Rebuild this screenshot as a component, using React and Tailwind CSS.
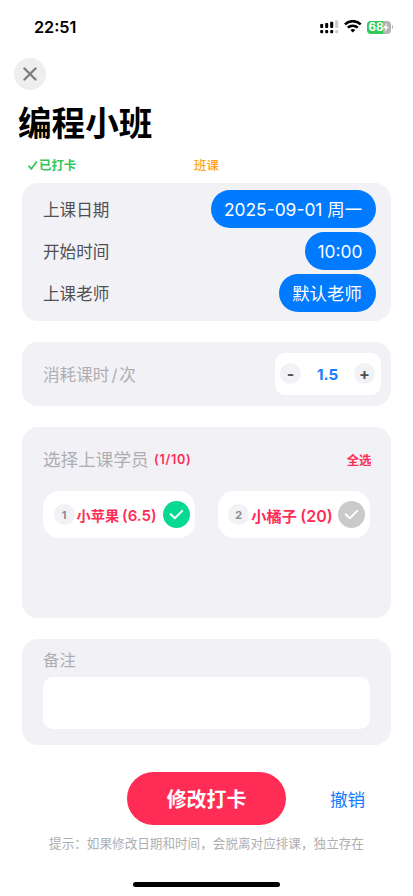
import { useState } from 'react';

const students = [
  { id: 1, name: '小苹果', hours: '(6.5)', size: 'text-[14.2px]', hoursSize: 'ml-[3px] text-[15px]' },
  { id: 2, name: '小橘子', hours: '(20)', size: 'text-[15.2px]', hoursSize: 'ml-[3.5px] text-[16px]' },
];

function SignalIcon() {
  return (
    <svg width="19" height="14" viewBox="0 0 19 14" fill="#000">
      <rect x="0.2" y="4" width="3" height="4" rx="0.8" />
      <rect x="5.2" y="3" width="3" height="5" rx="0.8" />
      <rect x="10.2" y="1.7" width="3" height="6.3" rx="0.8" />
      <rect x="15.2" y="0.3" width="3" height="7.7" rx="0.8" fill="#ccc" />
      <rect x="0.2" y="9.9" width="3" height="3.4" rx="1" />
      <rect x="5.2" y="9.9" width="3" height="3.4" rx="1" />
      <rect x="10.2" y="9.9" width="3" height="3.4" rx="1" />
      <rect x="15.2" y="9.9" width="3" height="3.4" rx="1" fill="#ccc" />
    </svg>
  );
}

function WifiIcon() {
  return (
    <svg width="18" height="14" viewBox="0 0 18 14" fill="none" stroke="#000" strokeWidth="2.5">
      <path d="M0.9 4.4a11.3 11.3 0 0 1 15.8 0" />
      <path d="M3.8 7.7a7.2 7.2 0 0 1 10 0" />
      <path d="M8.8 12.6 6.3 10.1a3.6 3.6 0 0 1 5 0z" fill="#000" stroke="none" />
    </svg>
  );
}

function Battery() {
  return (
    <div className="flex items-center gap-px">
      <div className="flex h-[13px] w-6 items-center rounded-[4px] bg-[linear-gradient(90deg,#34c759_68%,#b3b3b3_68%)] pl-[2px]">
        <span className="pt-px font-['Inter',sans-serif] text-[11.5px] leading-[13px] font-bold text-white">68</span>
        <svg width="6" height="9" viewBox="0 0 6 9" fill="#fff">
          <path d="M3.9 0 0.3 5h2.2L1.7 9 5.7 3.8H3.3z" />
        </svg>
      </div>
      <div className="h-1 w-[1.5px] rounded-r-full bg-[#b3b3b3]" />
    </div>
  );
}

function Row({ label, value, width }) {
  return (
    <div className="flex h-[38px] items-center justify-between">
      <span className="pt-[3px] text-[16.6px] text-[#505052]">{label}</span>
      <button className={`h-[38px] rounded-full bg-[#007aff] pt-[2px] text-[17.4px] whitespace-nowrap text-white ${width}`}>
        {value}
      </button>
    </div>
  );
}

function Student({ student, checked, onToggle }) {
  return (
    <button
      onClick={onToggle}
      className="flex h-[47px] w-[152px] items-center rounded-[16px] bg-white pr-[5px] pl-[10.5px] text-left"
    >
      <span className="flex h-[21px] w-[21px] shrink-0 items-center justify-center rounded-full bg-[#f2f1f6] pt-px font-['Inter',sans-serif] text-[11px] font-bold text-[#8a8a8e]">
        {student.id}
      </span>
      <span className={`ml-[2px] pt-[3px] font-semibold whitespace-nowrap text-[#ff2d55] ${student.size}`}>
        {student.name}
        <span className={student.hoursSize}>{student.hours}</span>
      </span>
      <span
        className={`ml-auto flex h-[27px] w-[27px] shrink-0 items-center justify-center rounded-full ${
          checked ? 'bg-[#06d993]' : 'bg-[#cacaca]'
        }`}
      >
        <svg width="15" height="11" viewBox="0 0 15 11" fill="none" stroke="#fff" strokeWidth="2" strokeLinecap="round" strokeLinejoin="round">
          <path d="m1.7 5.2 4.1 4.1 7.4-7.4" />
        </svg>
      </span>
    </button>
  );
}

export default function App() {
  const [hours, setHours] = useState(1.5);
  const [selected, setSelected] = useState([1]);
  const [note, setNote] = useState('');

  const toggle = (id) => {
    setSelected(selected.includes(id) ? selected.filter((s) => s !== id) : [...selected, id]);
  };

  return (
    <div className="flex h-[896px] w-[413px] flex-col overflow-hidden bg-white font-['Inter','Noto_Sans_CJK_SC',sans-serif]">
      <header className="flex h-[54px] shrink-0 items-center justify-between pr-5 pl-[34px]">
        <span className="text-[16.2px] font-semibold">22:51</span>
        <div className="flex items-center">
          <SignalIcon />
          <div className="ml-[5px] flex">
            <WifiIcon />
          </div>
          <div className="ml-[5px]">
            <Battery />
          </div>
        </div>
      </header>

      <button className="mt-1 ml-[14px] flex h-8 w-8 shrink-0 items-center justify-center rounded-full bg-[#eeeeef]">
        <svg width="14" height="14" viewBox="0 0 14 14" stroke="#7e7e82" strokeWidth="2.4" strokeLinecap="round">
          <path d="m1.5 1.5 11 11M12.5 1.5l-11 11" />
        </svg>
      </button>

      <h1 className="mt-[10px] ml-[18px] h-12 text-[33.6px] leading-[48px] font-bold text-black">编程小班</h1>

      <div className="mt-2 flex h-5 shrink-0 items-center pl-[28px] text-[12.4px]">
        <span className="flex w-[166px] items-center font-semibold text-[#34c759]">
          <svg className="mr-px" width="10" height="10" viewBox="0 0 10 10" fill="none" stroke="currentColor" strokeWidth="1.8" strokeLinecap="round" strokeLinejoin="round">
            <path d="M1 5.2 3.3 8 8.3 0.9" />
          </svg>
          已打卡
        </span>
        <span className="font-medium text-[#ff9f1f]">班课</span>
      </div>

      <main className="mt-[7px] mr-[22px] ml-[21.5px] flex shrink-0 flex-col gap-[21.6px]">
        <section className="flex h-[137.7px] flex-col gap-[3.8px] rounded-[16px] bg-[#f2f1f6] pt-[7px] pr-[15.5px] pl-[21.5px]">
          <Row label="上课日期" value="2025-09-01 周一" width="w-[165px]" />
          <Row label="开始时间" value="10:00" width="w-[71px]" />
          <Row label="上课老师" value="默认老师" width="w-[97px]" />
        </section>

        <section className="flex h-[63.4px] items-center justify-between rounded-[16px] bg-[#f2f1f6] pr-[10.5px] pl-[21.5px]">
          <span className="pt-[2px] text-[16.6px] text-[#aeaeb2]">
            消耗课时<span className="mx-[2px]">/</span>次
          </span>
          <div className="flex h-[42px] w-[106px] items-center justify-between rounded-[10px] bg-white px-[5.5px]">
            <button
              onClick={() => setHours(Math.max(0, hours - 0.5))}
              className="flex h-[21px] w-[21px] items-center justify-center rounded-full bg-[#f2f1f6]"
            >
              <span className="text-base font-bold text-[#505052]">-</span>
            </button>
            <span className="pt-[2px] text-[15.2px] font-bold text-[#167bff]">{hours}</span>
            <button
              onClick={() => setHours(hours + 0.5)}
              className="flex h-[21px] w-[21px] items-center justify-center rounded-full bg-[#f2f1f6]"
            >
              <span className="pt-px text-base font-bold text-[#505052]">+</span>
            </button>
          </div>
        </section>

        <section className="h-[190.4px] rounded-[16px] bg-[#f2f1f6] px-[21.5px] pt-[21px]">
          <div className="flex h-6 items-center">
            <h2 className="text-[17.6px] text-[#aeaeb2]">选择上课学员</h2>
            <span className="ml-[5.5px] text-[12.6px] font-semibold tracking-[0.7px] text-[#ff2d55]">({selected.length}/10)</span>
            <button
              onClick={() => setSelected(students.map((s) => s.id))}
              className="ml-auto -mr-[2px] pt-[2px] text-[12.4px] font-semibold text-[#ff2d55]"
            >
              全选
            </button>
          </div>
          <div className="mt-[18.7px] flex gap-[23px]">
            {students.map((s) => (
              <Student key={s.id} student={s} checked={selected.includes(s.id)} onToggle={() => toggle(s.id)} />
            ))}
          </div>
        </section>

        <section className="h-[105.7px] rounded-[16px] bg-[#f2f1f6] px-[21.5px] pt-[9px]">
          <label className="block h-[28.5px] text-[16.4px] leading-[25px] text-[#aeaeb2]">备注</label>
          <textarea
            value={note}
            onChange={(e) => setNote(e.target.value)}
            className="block h-[52px] w-full resize-none rounded-[10px] bg-white p-2 outline-none"
          />
        </section>
      </main>

      <div className="mt-[27px] ml-[127px] flex shrink-0 items-center">
        <button className="h-[53px] w-[159px] rounded-full bg-[#ff2d55] pt-[4px] text-[19.9px] font-bold text-white">修改打卡</button>
        <button className="ml-[44px] pt-[3px] text-[17.6px] text-[#167bff]">撤销</button>
      </div>
      <p className="mt-[9px] text-center text-[12.6px] leading-[19px] whitespace-nowrap text-[#aeaeb2]">
        提示：如果修改日期和时间，会脱离对应排课，独立存在
      </p>
      <div className="mt-[29px] ml-[133px] h-[5px] w-[147px] shrink-0 rounded-full bg-black" />
    </div>
  );
}
